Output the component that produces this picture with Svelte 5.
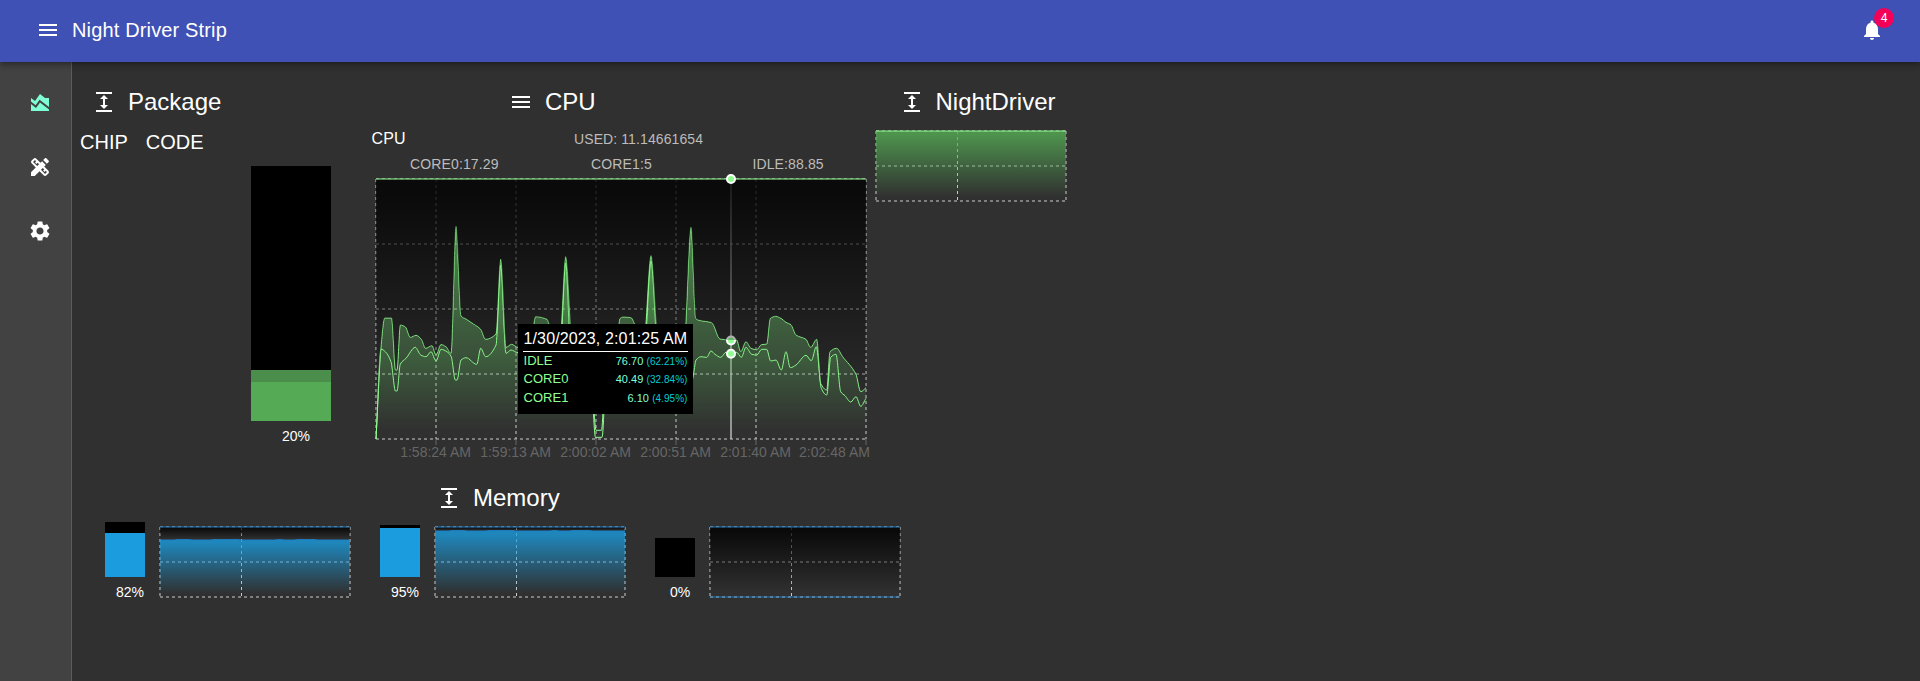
<script>
  const icons = {
    menu: 'M3 18h18v-2H3v2zm0-5h18v-2H3v2zm0-7v2h18V6H3z',
    expand: 'M4 20h16v2H4zM4 2h16v2H4zm9 7h3l-4-4-4 4h3v6H8l4 4 4-4h-3z',
    bell: 'M12 22c1.1 0 2-.9 2-2h-4c0 1.1.89 2 2 2zm6-6v-5c0-3.07-1.64-5.64-4.5-6.32V4c0-.83-.67-1.5-1.5-1.5s-1.5.67-1.5 1.5v.68C7.63 5.36 6 7.92 6 11v5l-2 2v1h16v-1l-2-2z',
    area: 'M3 13v7h18v-1.5l-9-7L8 17l-5-4zm0-6 4 3 5-7 5 4h4v8.97l-9.4-7.31-3.98 5.48L3 10.44V7z',
    design: 'm16.24 11.51 1.57-1.57-3.75-3.75-1.57 1.57-4.14-4.13c-.78-.78-2.05-.78-2.83 0l-1.9 1.9c-.78.78-.78 2.05 0 2.83l4.13 4.13L3 17.25V21h3.75l4.76-4.76 4.13 4.13c.95.95 2.23.6 2.83 0l1.9-1.9c.78-.78.78-2.05 0-2.83l-4.13-4.13zm-7.06-.44L5.04 6.94l1.89-1.9L8.2 6.31 7.02 7.5l1.41 1.41 1.19-1.19 1.45 1.45-1.89 1.9zm7.88 7.89-4.13-4.13 1.9-1.9 1.45 1.45-1.19 1.19 1.41 1.41 1.19-1.19 1.27 1.27-1.9 1.9zM20.71 7.04c.39-.39.39-1.02 0-1.41l-2.34-2.34c-.47-.47-1.12-.29-1.41 0l-1.83 1.83 3.75 3.75 1.83-1.83z',
    settings: 'M19.14 12.94c.04-.3.06-.61.06-.94 0-.32-.02-.64-.07-.94l2.03-1.58c.18-.14.23-.41.12-.61l-1.92-3.32c-.12-.22-.37-.29-.59-.22l-2.39.96c-.5-.38-1.03-.7-1.62-.94l-.36-2.54c-.04-.24-.24-.41-.48-.41h-3.84c-.24 0-.43.17-.47.41l-.36 2.54c-.59.24-1.13.57-1.62.94l-2.39-.96c-.22-.08-.47 0-.59.22L2.74 8.87c-.12.21-.08.47.12.61l2.03 1.58c-.05.3-.09.63-.09.94s.02.64.07.94l-2.03 1.58c-.18.14-.23.41-.12.61l1.92 3.32c.12.22.37.29.59.22l2.39-.96c.5.38 1.03.7 1.62.94l.36 2.54c.05.24.24.41.48.41h3.84c.24 0 .44-.17.47-.41l.36-2.54c.59-.24 1.13-.56 1.62-.94l2.39.96c.22.08.47 0 .59-.22l1.92-3.32c.12-.22.07-.47-.12-.61l-2.01-1.58zM12 15.6c-1.98 0-3.6-1.62-3.6-3.6s1.62-3.6 3.6-3.6 3.6 1.62 3.6 3.6-1.62 3.6-3.6 3.6z'
  };

  // Series in plot pixels: x from 0 to 490, y from 0 (100%) to 260 (idle floor)
  const upper = [
    [0,260],[5,168],[8.7,139],[15.5,139],[19.5,191],[21,191],[24.3,146],[29.5,148],[34.3,158.3],[40,156.3],[45.5,160.5],[49.5,169.3],[56,166.7],[60,176],[65,165.5],[70,167.7],[75,174.3],[80,47],[85,137],[90,140],[97.5,145],[104.7,150.3],[109.5,160.3],[120,155],[124.7,80],[130,168.3],[135.5,165.3],[142,168.3],[155,168],[158,144],[159.5,137.7],[171,140.3],[174,148],[184,160],[189.7,77.5],[196,160],[214,166],[220,251.3],[225.5,251.3],[230,170],[240,168],[244,139.5],[247,138],[255,138.7],[260,148],[268,160],[275,76.5],[282,160],[308,165],[315,48],[319.7,139.3],[323,141.3],[335.7,143.7],[344,160],[355,161],[360.7,161],[364.7,172.7],[370,162.7],[375,169.3],[380.7,170.7],[385.3,165.7],[390.7,165],[394.3,139.3],[399.7,137.3],[405,139.3],[410,143.3],[415,145.7],[420,156],[430,160.3],[434.7,168.3],[440.7,160.3],[444.7,204.3],[450.7,211],[454,172.7],[460.7,169.3],[466.7,177.7],[480,195.3],[484.7,212.7],[490,208.7]
  ];
  const lower = [
    [0,260],[5,170],[9.3,172.7],[15,182.7],[19.5,212],[21,212],[24.3,185],[30,179.3],[39.3,168.3],[44.7,176],[50,177.7],[55,172.7],[60,182],[65,170.3],[71,172.7],[75.3,177.7],[79.3,201],[81,201],[85,181],[90,178.7],[100.7,185.3],[104.7,169.3],[109.7,177.7],[120,166],[124.7,86],[130,174.3],[135,171],[142,173.7],[160,170],[184,176],[189.7,84],[195,176],[214,180],[219.5,258.3],[226,258.3],[231,180],[240,176],[268,176],[275,82],[282,176],[310,220],[317,198],[320,181],[325,177.7],[330.7,178.3],[335,172],[339,175.3],[344.7,178.3],[350,173.3],[355,174.7],[360.7,173.3],[365.3,178.3],[370,168.3],[375.7,175.3],[380.7,176],[385.7,170.3],[390.7,170.3],[394.7,182],[400,181],[405.3,191],[410,172.7],[414.3,188.7],[420,186],[430,176.3],[435.3,181.7],[440.3,167.7],[445.3,209.3],[450.7,216],[454.7,178.3],[460,175.3],[464.7,212.7],[469,216.7],[474.7,223],[480,217.7],[484.7,227.3],[490,219.3]
  ];

  function monotone(points) {
    const n = points.length;
    const slopes = points.slice(1).map((p, i) => (p[1] - points[i][1]) / (p[0] - points[i][0]));
    const tangent = points.map((p, i) => {
      if (i === 0 || i === n - 1) return slopes[i ? n - 2 : 0];
      const a = slopes[i - 1];
      const b = slopes[i];
      return a * b <= 0 ? 0 : (2 * a * b) / (a + b);
    });
    let d = `M${points[0][0]},${points[0][1]}`;
    for (let i = 1; i < n; i++) {
      const [x0, y0] = points[i - 1];
      const [x1, y1] = points[i];
      const h = (x1 - x0) / 3;
      d += `C${x0 + h},${y0 + h * tangent[i - 1]},${x1 - h},${y1 - h * tangent[i]},${x1},${y1}`;
    }
    return d;
  }

  const upperLine = monotone(upper);
  const lowerLine = monotone(lower);
  const lowerBack = monotone([...lower].reverse()).slice(1);

  const ticks = [
    [60, '1:58:24 AM'], [140, '1:59:13 AM'], [220, '2:00:02 AM'],
    [300, '2:00:51 AM'], [380, '2:01:40 AM'], [490, '2:02:48 AM']
  ];
  const tooltip = [
    ['IDLE', '76.70', '(62.21%)'],
    ['CORE0', '40.49', '(32.84%)'],
    ['CORE1', '6.10', '(4.95%)']
  ];
  const memory = [
    { label: '82%', free: 11, used: 44, top: 13 },
    { label: '95%', free: 3, used: 49, top: 4 },
    { label: '0%', free: 39, used: 0, top: 70 }
  ];
</script>

{#snippet icon(name)}
  <svg class="icon" width="24" height="24" viewBox="0 0 24 24"><path d={icons[name]} /></svg>
{/snippet}

{#snippet smallChart(id, color, top, idle)}
  <svg class="chart" width="192" height="72" viewBox="-1 -1 192 72">
    <defs>
      <linearGradient id="f{id}" x1="0" y1="0" x2="0" y2="1">
        <stop offset="5%" stop-color={color === 'green' ? '#55ab55' : '#1b9cde'} stop-opacity=".8" />
        <stop offset="95%" stop-color={color === 'green' ? '#55ab55' : '#1b9cde'} stop-opacity="0" />
      </linearGradient>
      <linearGradient id="b{id}" x1="0" y1="0" x2="0" y2="1">
        <stop offset="5%" stop-opacity=".8" />
        <stop offset="95%" stop-opacity="0" />
      </linearGradient>
    </defs>
    <g class="grid">
      <path d="M0 0H190M0 35H190M0 70H190M0 0V70M81.5 0V70M190 0V70" />
    </g>
    {#if idle}<rect width="190" height={top} fill="url(#b{id})" />{/if}
    {#if top < 70}
      <rect y={top} width="190" height={70 - top} fill="url(#f{id})" />
    {/if}
    {#if idle && top < 70}
      <path class="line blue" d="M0 {top}h14l3-.5h12l3 .5h18l4-.5h24l3 .5h34l3-.5h3l3 .5h10l4-.5h16l4 .5h32" />
    {/if}
    <path class="line {color}" d="M0 0H190" />
    {#if top === 70}<path class="line blue" d="M0 70H190" />{/if}
  </svg>
{/snippet}

<div class="app">
  <header>
    {@render icon('menu')}
    <h1>Night Driver Strip</h1>
    <div class="notify">
      {@render icon('bell')}
      <span class="badge">4</span>
    </div>
  </header>
  <div class="body">
    <nav>
      <span class="active">{@render icon('area')}</span>
      <span>{@render icon('design')}</span>
      <span>{@render icon('settings')}</span>
    </nav>
    <main>
      <div class="row">
        <section class="package">
          <h2>{@render icon('expand')}Package</h2>
          <div class="tabs"><span>CHIP</span><span>CODE</span></div>
          <div class="bar big">
            <i class="free"></i><i class="sketch"></i><i class="code"></i>
          </div>
          <p class="percent">20%</p>
        </section>
        <section class="cpu">
          <h2>{@render icon('menu')}CPU</h2>
          <div class="stats">
            <span class="name">CPU</span><span class="total">USED: 11.14661654</span>
          </div>
          <div class="cores"><span>CORE0:17.29</span><span>CORE1:5</span><span>IDLE:88.85</span></div>
          <div class="plot">
            <svg class="chart" width="510" height="292" viewBox="-8 -6 510 292">
              <defs>
                <linearGradient id="idle" x1="0" y1="0" x2="0" y2="1">
                  <stop offset="5%" stop-opacity=".8" />
                  <stop offset="95%" stop-opacity="0" />
                </linearGradient>
                <linearGradient id="core" x1="0" y1="0" x2="0" y2="1">
                  <stop offset="5%" stop-color="#55ab55" stop-opacity=".8" />
                  <stop offset="95%" stop-color="#55ab55" stop-opacity="0" />
                </linearGradient>
              </defs>
              <g class="grid">
                <path d="M0 0H490M0 65H490M0 130H490M0 195H490M0 260H490" />
                <path d="M0 0V260M60 0V260M140 0V260M220 0V260M300 0V260M380 0V260M490 0V260" />
              </g>
              <path class="cursor" d="M355 0V260" />
              <path d="{lowerLine}V260H0Z" fill="url(#core)" />
              <path class="line green" d={lowerLine} />
              <path d="{upperLine}L{lowerBack}Z" fill="url(#core)" fill-opacity=".85" />
              <path class="line green" d={upperLine} />
              <g class="dots">
                <circle cx="355" cy="161.5" r="4" />
                <circle cx="355" cy="174.7" r="4" />
              </g>
              <path d="{upperLine}V0H0Z" fill="url(#idle)" />
              <path class="line green" d="M0 0H490" />
              <circle class="dots" cx="355" cy="0" r="4" />
              {#each ticks as [x, label], i}
                <path class="tick" d="M{x} 260v6" />
                <text x={i === 5 ? 458.5 : x - 0.4} y="278">{label}</text>
              {/each}
            </svg>
            <div class="tooltip">
              <div class="time">1/30/2023, 2:01:25 AM</div>
              {#each tooltip as [name, value, share]}
                <div class="entry"><b>{name}</b><span>{value} <em>{share}</em></span></div>
              {/each}
            </div>
          </div>
        </section>
        <section class="driver">
          <h2>{@render icon('expand')}NightDriver</h2>
          {@render smallChart('n', 'green', 0, false)}
        </section>
      </div>
      <section class="memory">
        <h2>{@render icon('expand')}Memory</h2>
        <div class="gauges">
          {#each memory as m, i}
            <div class="gauge">
              <div class="meter">
                <i class="free" style="height:{m.free}px"></i>
                <i class="used" style="height:{m.used}px"></i>
                <p>{m.label}</p>
              </div>
              {@render smallChart('m' + i, 'blue', m.top, true)}
            </div>
          {/each}
        </div>
      </section>
    </main>
  </div>
</div>

<style>
  :global(body) { background: #303030; overflow: hidden; }
  .app {
    height: 681px;
    display: flex;
    flex-direction: column;
    font-family: "Liberation Sans", Arial, sans-serif;
    color: #fff;
    background: #303030;
  }
  h1, h2, p { margin: 0; font-weight: 400; }
  .icon { display: block; flex: none; fill: currentColor; }
  header {
    height: 62px;
    flex: none;
    box-sizing: border-box;
    padding: 0 36px 2px;
    display: flex;
    align-items: center;
    background: #3f51b5;
    box-shadow: 0 2px 4px -1px rgba(0,0,0,.2), 0 4px 5px rgba(0,0,0,.14), 0 1px 10px rgba(0,0,0,.12);
    position: relative;
    z-index: 1;
  }
  h1 { flex: 1; margin-left: 12px; font-size: 20px; letter-spacing: .15px; line-height: 32px; }
  .notify { position: relative; }
  .badge {
    position: absolute;
    right: -10px;
    top: -10px;
    width: 20px;
    height: 20px;
    border-radius: 10px;
    background: #f50057;
    font: 12px/20px Roboto, "Liberation Sans", sans-serif;
    text-align: center;
  }
  .body { flex: 1; display: flex; min-height: 0; }
  nav {
    width: 43px;
    flex: none;
    padding: 29px 0 0 28px;
    display: flex;
    flex-direction: column;
    gap: 40px;
    background: #424242;
    border-right: 1px solid #5c5c5c;
  }
  .active { color: #7fffd4; }
  main { flex: 1; min-width: 0; }
  .row { display: flex; height: 396px; }
  h2 {
    padding-top: 28px;
    height: 24px;
    display: flex;
    gap: 12px;
    font-size: 24px;
    line-height: 24px;
  }
  .package { width: 296px; }
  .package h2 { padding-left: 20px; }
  .tabs { display: flex; gap: 18px; margin: 16px 0 0 8px; font-size: 20px; line-height: 24px; }
  .bar { display: flex; flex-direction: column; }
  .big { width: 80px; margin: 12px 0 0 179px; }
  .big .free { height: 204px; }
  .free { background: #000; }
  .sketch { height: 12px; background: #4b8e4b; }
  .code { height: 39px; background: #55ab55; }
  .percent { width: 28px; margin: 6px 0 0 210px; font-size: 14px; line-height: 18px; }
  .cpu { width: 499px; }
  .cpu h2 { padding-left: 141px; }
  .stats { display: flex; height: 24px; margin-top: 13px; padding-left: 3.5px; line-height: 24px; letter-spacing: .1px; }
  .name { width: 202.5px; font-size: 16px; }
  .total, .cores { font-size: 14px; color: #bcbcbc; }
  .cores { display: flex; gap: 92.5px; padding-left: 42px; height: 22px; line-height: 26px; letter-spacing: .13px; }
  .cores span:nth-child(2) { margin-right: 8px; }
  .plot { position: relative; }
  .plot .chart { display: block; }
  .chart { overflow: visible; flex: none; }
  .grid { stroke: #ccc; stroke-dasharray: 3 3; fill: none; }
  .line { fill: none; stroke-width: 1; }
  .line.green { stroke: #90ff90; }
  .line.blue { stroke: #1b84cf; stroke-opacity: .9; }
  .tick { stroke: #666; }
  text { font-size: 14px; fill: #666; text-anchor: middle; }
  .cursor { stroke: #ccc; stroke-width: 1.3; }
  .dots { fill: #90ff90; stroke: #fff; stroke-width: 2; }
  .tooltip {
    position: absolute;
    left: 150px;
    top: 151px;
    width: 165px;
    height: 87px;
    padding: 3px 5px 0;
    background: #000;
  }
  .time { padding-left: .5px; font-size: 16px; line-height: 24px; letter-spacing: .13px; white-space: nowrap; border-bottom: 1px solid #fff; }
  .entry { display: flex; justify-content: space-between; height: 18.4px; line-height: 18px; font-size: 13px; padding-left: .6px; }
  .entry b { font-weight: 400; color: #90ff90; }
  .entry span { font-size: 11px; color: #7fffd4; margin-right: .5px; letter-spacing: .05px; }
  .entry em { font-style: normal; font-size: 10px; color: #00ced1; }
  .driver h2 { padding-left: 32.5px; }
  .driver .chart { display: block; margin: 16px 0 0 8px; }
  .memory h2 { padding-left: 365px; }
  .gauges { display: flex; gap: 29px; padding-left: 33px; margin-top: 12px; }
  .gauge { display: flex; height: 86px; align-items: flex-start; gap: 14px; }
  .gauge .chart { margin-top: 4px; }
  .meter { width: 40px; height: 79px; display: flex; flex-direction: column; justify-content: flex-end; }
  .meter .used { background: #1b9cde; }
  .meter p { padding-top: 6px; font-size: 14px; line-height: 18px; text-align: center; width: 40px; text-indent: 10px; white-space: nowrap; }
</style>
